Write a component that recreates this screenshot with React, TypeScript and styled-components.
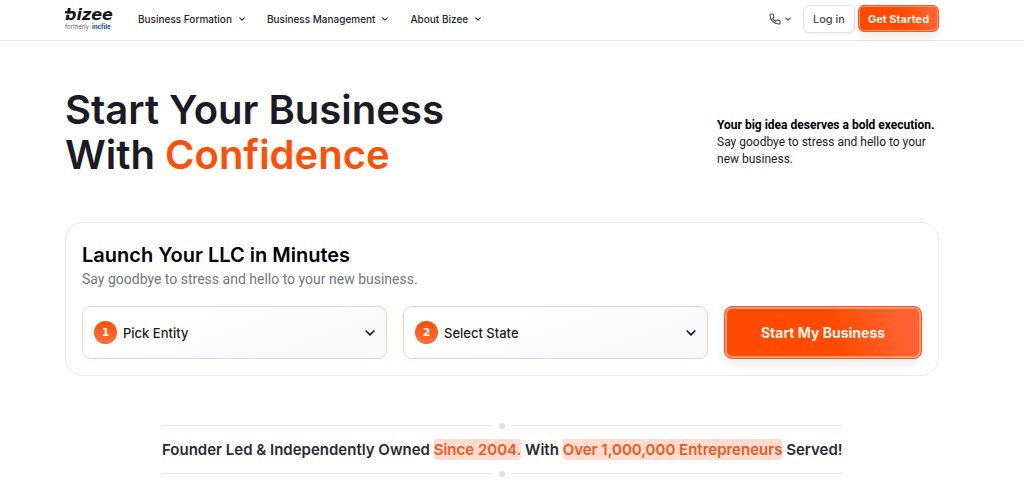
import React from "react";
import styled, { createGlobalStyle, css } from "styled-components";

const GlobalStyle = createGlobalStyle`
  *, *::before, *::after { box-sizing: border-box; }
  body {
    margin: 0;
    background: #fff;
    color: #1b1b25;
    font-family: Inter, "Liberation Sans", sans-serif;
  }
  button, select { font-family: inherit; }
  h1, h2, p { margin: 0; }
`;

const gutters = css`
  padding-left: 65px;
  padding-right: 85px;
`;

const Header = styled.header`
  ${gutters}
  display: flex;
  align-items: center;
  height: 41px;
  padding-bottom: 3px;
  border-bottom: 1px solid #e6e6e8;
`;

const LogoLink = styled.a`
  display: flex;
  width: 49px;
  margin-right: 24px;
`;

const Nav = styled.nav`
  display: flex;
  gap: 22px;
`;

const NavButton = styled.button`
  display: flex;
  align-items: center;
  gap: 7px;
  padding: 0;
  border: 0;
  background: none;
  color: #24242c;
  font-size: 10px;
  font-weight: 500;
  line-height: 16px;
  white-space: nowrap;
`;

const Actions = styled.div`
  display: flex;
  align-items: center;
  margin-left: auto;
`;

const PhoneButton = styled(NavButton)`
  gap: 4px;
  margin-right: 12px;
  color: #4a4a52;
`;

const LoginButton = styled.button`
  width: 52px;
  height: 28px;
  margin-right: 3px;
  padding: 0;
  border: 1px solid #e4e4e6;
  border-radius: 6px;
  background: #fff;
  box-shadow: 0 1px 2px rgba(0, 0, 0, 0.08);
  color: #4a4a4f;
  font-size: 11px;
  font-weight: 500;
`;

const PrimaryButton = styled.button<{ $large?: boolean }>`
  width: ${(p) => (p.$large ? "198px" : "81px")};
  height: ${(p) => (p.$large ? "53px" : "27px")};
  padding: 0;
  border: 1px solid #e8602f;
  border-radius: ${(p) => (p.$large ? "8px" : "6px")};
  background: linear-gradient(75deg, #ff4a00 55%, #ff6230 88%);
  box-shadow:
    inset 0 0 0 ${(p) => (p.$large ? "2px" : "1px")} #ff9670,
    0 5px 8px rgba(0, 0, 0, 0.08);
  color: #fff3e6;
  font-size: ${(p) => (p.$large ? "14px" : "11px")};
  font-weight: 700;
  white-space: nowrap;
`;

const Hero = styled.section`
  ${gutters}
  display: flex;
  justify-content: space-between;
  align-items: flex-end;
  padding-top: 46px;
`;

const Title = styled.h1`
  font-size: 40px;
  font-weight: 600;
  line-height: 45px;
  white-space: nowrap;
`;

const Accent = styled.span`
  color: #ff4f05;
`;

const Pitch = styled.p`
  width: 222px;
  padding-bottom: 9px;
  color: #1a1a1a;
  font-family: Roboto, "Liberation Sans", sans-serif;
  font-size: 12px;
  line-height: 17px;

  strong {
    display: block;
    color: #000;
    font-weight: 700;
    white-space: nowrap;
  }
`;

const Main = styled.main`
  ${gutters}
  padding-top: 45px;
`;

const Card = styled.form`
  padding: 19px 16px 16px;
  border: 1px solid #ebebed;
  border-radius: 18px;
`;

const CardTitle = styled.h2`
  color: #000;
  font-size: 20px;
  font-weight: 600;
  line-height: 26px;
`;

const CardText = styled.p`
  margin-bottom: 16px;
  color: #73767d;
  font-family: Roboto, "Liberation Sans", sans-serif;
  font-size: 14px;
  line-height: 22px;
`;

const Fields = styled.div`
  display: grid;
  grid-template-columns: 1fr 1fr 198px;
  gap: 16px;
`;

const Field = styled.label`
  display: flex;
  align-items: center;
  height: 53px;
  padding: 0 11px;
  border: 1px solid #f8cfc3;
  border-radius: 9px;
  background: linear-gradient(160deg, #fff 30%, #f9f9f9 75%) padding-box;
`;

const Step = styled.span`
  display: flex;
  align-items: center;
  justify-content: center;
  width: 23px;
  height: 23px;
  margin-right: 6px;
  border-radius: 50%;
  background: linear-gradient(#ff4d06, #ff7040);
  color: #fff;
  font-family: "DejaVu Sans", sans-serif;
  font-size: 11px;
  font-weight: 700;
`;

const Select = styled.select`
  flex: 1;
  min-width: 0;
  height: 100%;
  padding: 0;
  border: 0;
  appearance: none;
  background: none;
  color: #1e1e22;
  font-size: 13px;
  font-weight: 500;
`;

const Banner = styled.section`
  width: 680px;
  max-width: 100%;
  margin: 46px auto 0;
`;

const Rule = styled.div`
  display: flex;
  align-items: center;
  gap: 6px;
  height: 7px;

  &::before, &::after {
    content: "";
    flex: 1;
    height: 1px;
    background: #e9e9eb;
  }
`;

const Dot = styled.span`
  width: 6px;
  height: 6px;
  border-radius: 50%;
  background: #e2e2e5;
`;

const Tagline = styled.p`
  padding: 10px 0;
  color: #2a2a31;
  font-size: 15px;
  font-weight: 600;
  line-height: 21px;
  text-align: center;
  white-space: nowrap;
`;

const Highlight = styled.mark`
  display: inline-block;
  border-radius: 3px;
  background: #ffdccf;
  color: #ee5a1c;
`;

const Chevron = ({ size = 6, weight = 1.1 }: { size?: number; weight?: number }) => (
  <svg width={size} height={size} viewBox="0 0 6 6" fill="none" stroke="currentColor" aria-hidden="true">
    <path d="M.7 1.8 3 4.1 5.3 1.8" strokeWidth={weight} strokeLinecap="round" strokeLinejoin="round" />
  </svg>
);

const Phone = () => (
  <svg width="12" height="12" viewBox="0 0 24 24" fill="none" stroke="currentColor" strokeWidth="2.2" strokeLinejoin="round" aria-hidden="true">
    <path d="M4 2h3c1 0 1.500.5 1.800 1.500l.9 3.500c.2 1 0 1.600-.7 2.200L7.200 10.700c1.200 2.600 3.200 4.700 6 6l1.700-1.800c.6-.7 1.300-.9 2.200-.7l3.500.9c1 .3 1.500.9 1.500 1.900v3c0 1.300-.8 2-2 2C10 22 2 14 2 4c0-1.200.7-2 2-2Z" />
  </svg>
);

const LogoSvg = styled.svg`
  overflow: visible;
`;

const Logo = () => (
  <LogoSvg width="49" height="24" viewBox="0 0 49 24" aria-hidden="true">
    <text x="0" y="13" fill="#15151a" fontFamily="DejaVu Sans, sans-serif" fontSize="16" fontStyle="italic" fontWeight="700">bizee</text>
    <path d="M0 5.200h7" stroke="#15151a" strokeWidth="2" />
    <path d="M0 7.200h5" stroke="#fff" strokeWidth="1" />
    <text x="0" y="22" fill="#5c5c62" fontFamily="Inter, sans-serif" fontSize="6">formerly</text>
    <text x="27" y="22" fill="#1c6299" fontFamily="Inter, sans-serif" fontSize="6" fontWeight="800">incfile</text>
  </LogoSvg>
);

const menus = ["Business Formation", "Business Management", "About Bizee"];
const steps = ["Pick Entity", "Select State"];

export default function App() {
  return (
    <>
      <GlobalStyle />
      <Header>
        <LogoLink href="#" aria-label="Bizee, formerly Incfile">
          <Logo />
        </LogoLink>
        <Nav>
          {menus.map((name) => (
            <NavButton key={name} type="button">
              {name}
              <Chevron />
            </NavButton>
          ))}
        </Nav>
        <Actions>
          <PhoneButton type="button" aria-label="Phone">
            <Phone />
            <Chevron />
          </PhoneButton>
          <LoginButton type="button">Log in</LoginButton>
          <PrimaryButton type="button">Get Started</PrimaryButton>
        </Actions>
      </Header>
      <Hero>
        <Title>
          Start Your Business
          <br />
          With <Accent>Confidence</Accent>
        </Title>
        <Pitch>
          <strong>Your big idea deserves a bold execution.</strong>
          Say goodbye to stress and hello to your new business.
        </Pitch>
      </Hero>
      <Main>
        <Card>
          <CardTitle>Launch Your LLC in Minutes</CardTitle>
          <CardText>Say goodbye to stress and hello to your new business.</CardText>
          <Fields>
            {steps.map((name, i) => (
              <Field key={name}>
                <Step>{i + 1}</Step>
                <Select aria-label={name}>
                  <option>{name}</option>
                </Select>
                <Chevron size={10} weight={1} />
              </Field>
            ))}
            <PrimaryButton type="button" $large>
              Start My Business
            </PrimaryButton>
          </Fields>
        </Card>
        <Banner>
          <Rule>
            <Dot />
          </Rule>
          <Tagline>
            Founder Led &amp; Independently Owned <Highlight>Since 2004.</Highlight> With{" "}
            <Highlight>Over 1,000,000 Entrepreneurs</Highlight> Served!
          </Tagline>
          <Rule>
            <Dot />
          </Rule>
        </Banner>
      </Main>
    </>
  );
}
